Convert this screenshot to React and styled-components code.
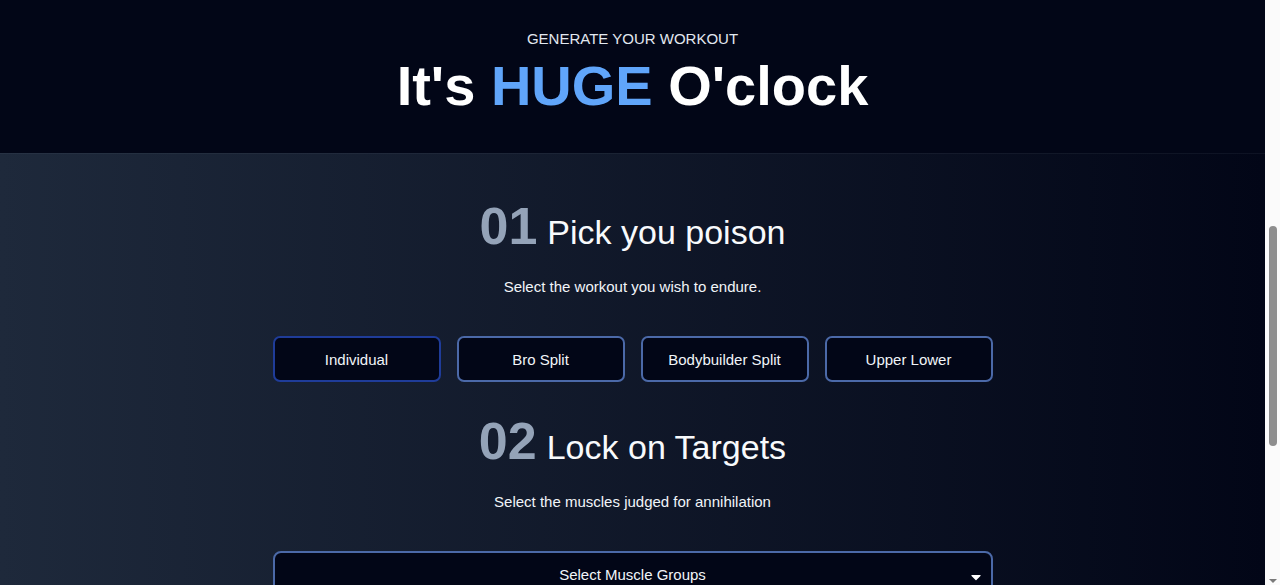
import React, { useState } from "react";
import styled, { createGlobalStyle } from "styled-components";
import { FaCaretDown } from "react-icons/fa";

const GlobalStyle = createGlobalStyle`
  * {
    box-sizing: border-box;
  }
  body {
    margin: 0;
    background: #020617;
    color: #f8fafc;
    font-family: "Liberation Sans", Arial, sans-serif;
  }
`;

const Page = styled.div`
  display: flex;
  height: 100vh;
`;

const Content = styled.div`
  flex: 1;
  overflow-y: auto;
`;

// the browser's scrollbar as it appears in the reference
const ScrollRail = styled.aside`
  display: flex;
  flex-direction: column;
  align-items: center;
  width: 15px;
  background: #fbfbfb;
  padding-top: 226px;
`;

const ScrollThumb = styled.div`
  width: 8px;
  height: 220px;
  border-radius: 4px;
  background: #8e8e8e;
`;

const ScrollArrow = styled.div`
  margin-top: auto;
  margin-bottom: 2px;
  border-left: 4px solid transparent;
  border-right: 4px solid transparent;
  border-top: 4px solid #7a7a7a;
`;

const Header = styled.header`
  display: flex;
  flex-direction: column;
  align-items: center;
  background: #020617;
  padding: 29px 16px 39px;
`;

const Kicker = styled.p`
  margin: 0;
  font-size: 15px;
  line-height: 20px;
  text-transform: uppercase;
  color: #e2e8f0;
`;

const Title = styled.h1`
  margin: 9px 0 0;
  font-size: 56px;
  line-height: 56px;
  font-weight: 700;
  color: #ffffff;
`;

const Accent = styled.span`
  color: #60a5fa;
`;

const Generator = styled.main`
  display: flex;
  flex-direction: column;
  align-items: center;
  padding: 48px 16px 120px;
  background: linear-gradient(to right, #1e293b, #020617);
  border-top: 1px solid rgba(148, 163, 184, 0.08);
  min-height: 900px;
`;

const Step = styled.section`
  display: flex;
  flex-direction: column;
  align-items: center;
  width: 100%;
  max-width: 720px;
  & + & {
    margin-top: 35px;
  }
`;

const StepHead = styled.div`
  display: flex;
  align-items: baseline;
  gap: 10px;
`;

const StepNumber = styled.span`
  font-size: 52px;
  line-height: 48px;
  font-weight: 700;
  color: #94a3b8;
`;

const StepTitle = styled.h2`
  margin: 0;
  font-size: 34px;
  line-height: 48px;
  font-weight: 400;
  color: #f8fafc;
`;

const StepText = styled.p`
  margin: 21px 0 39px;
  font-size: 15px;
  line-height: 20px;
  color: #f1f5f9;
`;

const Options = styled.div`
  display: grid;
  grid-template-columns: repeat(${(p) => p.$cols || 4}, 1fr);
  gap: 16px;
  width: 100%;
`;

const Option = styled.button`
  height: 46px;
  border-radius: 7px;
  background: #020617;
  border: 2px solid ${(p) => (p.$active ? "#1f3c99" : "#4b69a8")};
  color: #f1f5f9;
  font-family: inherit;
  font-size: 15px;
  cursor: pointer;
`;

const Select = styled.button`
  position: relative;
  width: 100%;
  height: 46px;
  border-radius: 8px;
  background: #020617;
  border: 2px solid #4b69a8;
  color: #f1f5f9;
  font-family: inherit;
  font-size: 15px;
  cursor: pointer;
`;

const Caret = styled(FaCaretDown)`
  position: absolute;
  right: 7px;
  top: 16px;
  font-size: 16px;
  color: #ffffff;
`;

const workouts = ["Individual", "Bro Split", "Bodybuilder Split", "Upper Lower"];
const goals = ["Strength Power", "Growth Hypertrophy", "Cardiovascular Endurance"];

export default function App() {
  const [workout, setWorkout] = useState("Individual");
  const [goal, setGoal] = useState(goals[0]);

  return (
    <Page>
      <GlobalStyle />
      <Content>
        <Header>
          <Kicker>Generate your workout</Kicker>
          <Title>
            It's <Accent>HUGE</Accent> O'clock
          </Title>
        </Header>
        <Generator>
          <Step>
            <StepHead>
              <StepNumber>01</StepNumber>
              <StepTitle>Pick you poison</StepTitle>
            </StepHead>
            <StepText>Select the workout you wish to endure.</StepText>
            <Options>
              {workouts.map((w) => (
                <Option key={w} $active={w === workout} onClick={() => setWorkout(w)}>
                  {w}
                </Option>
              ))}
            </Options>
          </Step>
          <Step>
            <StepHead>
              <StepNumber>02</StepNumber>
              <StepTitle>Lock on Targets</StepTitle>
            </StepHead>
            <StepText>Select the muscles judged for annihilation</StepText>
            <Select>
              Select Muscle Groups
              <Caret />
            </Select>
          </Step>
          <Step>
            <StepHead>
              <StepNumber>03</StepNumber>
              <StepTitle>Become Juggernaut</StepTitle>
            </StepHead>
            <StepText>Select your ultimate objective.</StepText>
            <Options $cols={3}>
              {goals.map((g) => (
                <Option key={g} $active={g === goal} onClick={() => setGoal(g)}>
                  {g}
                </Option>
              ))}
            </Options>
          </Step>
        </Generator>
      </Content>
      <ScrollRail>
        <ScrollThumb />
        <ScrollArrow />
      </ScrollRail>
    </Page>
  );
}
